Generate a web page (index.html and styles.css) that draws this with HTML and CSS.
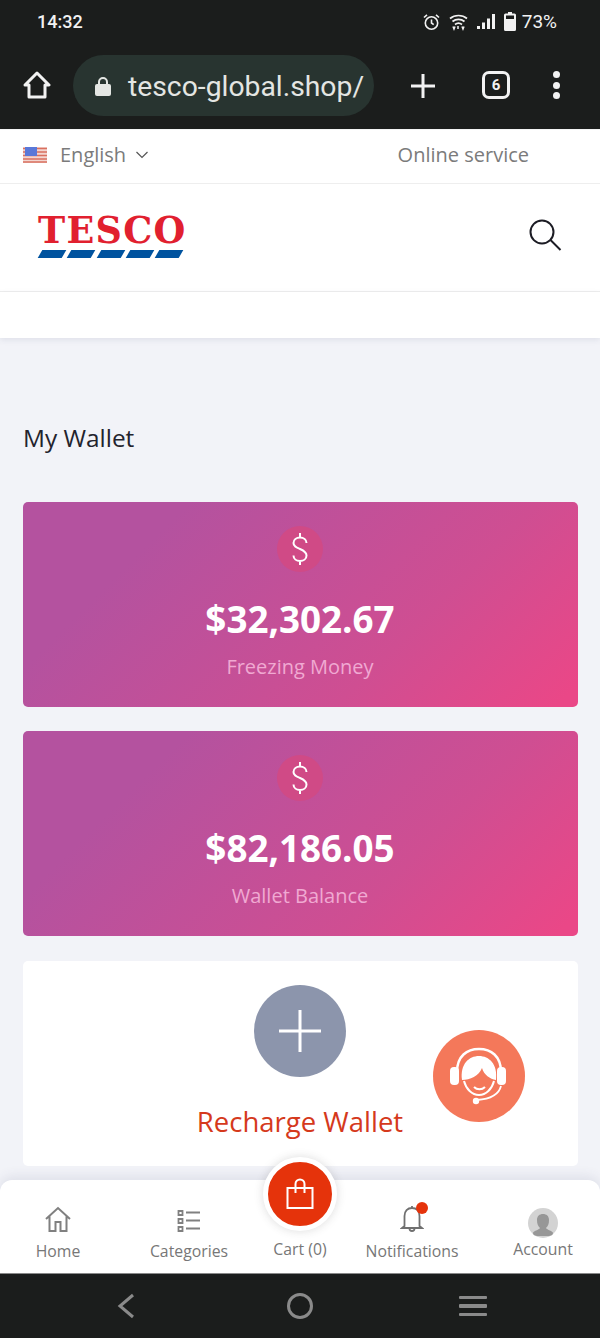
FILE: index.html
```html
<!DOCTYPE html>
<html lang="en">

<head>
  <meta charset="UTF-8">
  <meta name="viewport" content="width=device-width, initial-scale=1.0">
  <title>My Wallet</title>
  <link rel="stylesheet" href="styles.css">
</head>

<body>

  <header class="browser">
    <div class="status">
      <span class="clock">14:32</span>
      <div class="status-icons">
        <svg width="17" height="18" viewBox="0 0 17 18" fill="none" stroke="#f2f2f2" stroke-width="1.6"><circle cx="8.500" cy="10" r="6.200"/><path d="M8.500 6.500V10l2.200 1.600M1 4.500 4 1.800M16 4.500l-3-2.700"/></svg>
        <svg width="19" height="18" viewBox="0 0 19 18" fill="none" stroke="#f2f2f2" stroke-width="1.700"><path d="M1 5.500c4.800-4 12.200-4 17 0M3.500 8.500c3.500-2.800 8.500-2.800 12 0M6 11.500c2-1.500 5-1.500 7 0"/><path d="M4 13.500 5 16l1-2.500M13 13.500l1 2.500 1-2.500M9 13v3" stroke-width="1.500"/></svg>
        <svg width="18" height="16" viewBox="0 0 18 16" fill="#f2f2f2"><rect x="0" y="12" width="3" height="3"/><rect x="5" y="8.500" width="3" height="6.500"/><rect x="10" y="4.500" width="3" height="10.500"/><rect x="15" y="0" width="3" height="15"/></svg>
        <svg width="12" height="19" viewBox="0 0 12 19" fill="#f2f2f2"><path d="M4 0h4v1.500h2.500q1.500 0 1.500 1.500v14.500q0 1.500-1.500 1.500h-9Q0 19 0 17.500V3q0-1.500 1.500-1.500H4z"/><rect x="2" y="3.500" width="8" height="3.500" fill="#1b1d1c"/></svg>
        <span class="battery">73%</span>
      </div>
    </div>
    <div class="toolbar">
      <svg class="home-btn" width="28" height="30" viewBox="0 0 28 30" fill="none" stroke="#f2f2f2" stroke-width="3" stroke-linejoin="round"><path d="M2 15 14 3l12 12h-4v12H6V15z"/></svg>
      <div class="urlbar">
        <svg width="16" height="20" viewBox="0 0 16 20"><path d="M4 9V6a4 4 0 0 1 8 0v3" fill="none" stroke="#e4e6e3" stroke-width="2"/><rect y="8" width="16" height="12" rx="2" fill="#e4e6e3"/></svg>
        <span class="url">tesco-global.shop/</span>
      </div>
      <svg class="plus-btn" width="26" height="26" viewBox="0 0 26 26" stroke="#f2f2f2" stroke-width="3"><path d="M13 1v24M1 13h24"/></svg>
      <span class="tabs">6</span>
      <div class="dots"><i></i><i></i><i></i></div>
    </div>
  </header>

  <div class="topbar">
    <div class="lang">
      <svg class="flag" width="24" height="16" viewBox="0 0 24 16">
        <rect width="24" height="16" fill="#f3d6d0"/>
        <path d="M0 1.500h24M0 5h24M0 8.500h24M0 12h24M0 15h24" stroke="#d9705f" stroke-width="1.600"/>
        <rect x="2" width="12" height="9" fill="#5a78d8"/>
      </svg>
      <span>English</span>
      <svg class="chevron" width="14" height="8" viewBox="0 0 14 8" fill="none" stroke="#555" stroke-width="1.200"><path d="m1.500 1 5.500 5.500L12.500 1"/></svg>
    </div>
    <span class="service">Online service</span>
  </div>

  <div class="logobar">
    <div class="logo">
      <span class="logo-text">TESCO</span>
      <div class="logo-stripes"><i></i><i></i><i></i><i></i><i></i></div>
    </div>
    <svg width="34" height="34" viewBox="0 0 34 34" fill="none" stroke="#1c1c24" stroke-width="2"><circle cx="14" cy="14" r="11.500"/><path d="m22.500 22 10 10"/></svg>
  </div>

  <div class="navbar"></div>

  <main class="page">
    <h2 class="page-title">My Wallet</h2>

    <section class="wallet-card">
      <div class="coin">
        <svg width="18" height="34" viewBox="0 0 18 34" fill="none" stroke="#fff" stroke-width="2"><path d="M15.500 11c0-3.500-3-5.500-6.500-5.500S2.500 7.500 2.500 11 5.500 15.500 9 17s6.500 3 6.500 6.500-3 5.500-6.500 5.500-6.500-2-6.500-5.500M9 1v4.500M9 29v4"/></svg>
      </div>
      <div class="amount">$32,302.67</div>
      <div class="amount-label">Freezing Money</div>
    </section>

    <section class="wallet-card">
      <div class="coin">
        <svg width="18" height="34" viewBox="0 0 18 34" fill="none" stroke="#fff" stroke-width="2"><path d="M15.500 11c0-3.500-3-5.500-6.500-5.500S2.500 7.500 2.500 11 5.500 15.500 9 17s6.500 3 6.500 6.500-3 5.500-6.500 5.500-6.500-2-6.500-5.500M9 1v4.500M9 29v4"/></svg>
      </div>
      <div class="amount">$82,186.05</div>
      <div class="amount-label">Wallet Balance</div>
    </section>

    <section class="recharge">
      <div class="recharge-btn">
        <svg width="42" height="42" viewBox="0 0 42 42" stroke="#fff" stroke-width="3"><path d="M21 0v42M0 21h42"/></svg>
      </div>
      <div class="recharge-label">Recharge Wallet</div>
    </section>

    <div class="support">
      <svg width="80" height="80" viewBox="0 0 80 80">
        <path d="M18 36C18 20 28 13 40 13s22 7 22 23" fill="none" stroke="#fff" stroke-width="2.500"/>
        <path d="M23 44c-2-16 7-24 17-24s19 8 17 24c-6-1-12-5-14-12-3 8-12 12-20 12z" fill="#fff"/>
        <path d="M25 45c2 8 8 14 15 14s13-6 15-14" fill="none" stroke="#fff" stroke-width="2"/>
        <path d="M35 51c3 3 8 3 11 0" fill="none" stroke="#fff" stroke-width="2"/>
        <rect x="11" y="31" width="9" height="18" rx="4" fill="#fff"/>
        <rect x="58" y="31" width="9" height="18" rx="4" fill="#fff"/>
        <path d="M62 50c-2 8-10 13-24 14" fill="none" stroke="#fff" stroke-width="1.800"/>
        <circle cx="37" cy="65" r="3.200" fill="#fff"/>
      </svg>
    </div>
  </main>

  <nav class="tabbar">
    <a class="tab">
      <svg width="28" height="28" viewBox="0 0 28 28" fill="none" stroke="#808080" stroke-width="2"><path d="M2 14 14 3l12 11M5.500 11.500V26h6v-9h5v9h6V11.500"/></svg>
      <span>Home</span>
    </a>
    <a class="tab">
      <svg width="24" height="24" viewBox="0 0 24 24" fill="none" stroke="#808080" stroke-width="1.800"><path d="M1.500 2h4v4h-4zM1.500 10h4v4h-4zM1.500 18h4v4h-4zM9 3.500h14M9 11.500h14M9 19.500h14"/></svg>
      <span>Categories</span>
    </a>
    <a class="tab tab-cart">
      <span>Cart (0)</span>
    </a>
    <a class="tab">
      <svg width="24" height="28" viewBox="0 0 24 28" fill="none" stroke="#707070" stroke-width="1.800"><path d="M4.500 21V11c0-5 3-8 7.500-8s7.500 3 7.500 8v10l2.500 2H2zM9.500 23.500a2.500 2.500 0 0 0 5 0M12 1v2"/></svg>
      <span>Notifications</span>
      <i class="dot"></i>
    </a>
    <a class="tab tab-account">
      <svg class="avatar" width="30" height="30" viewBox="0 0 30 30">
        <circle cx="15" cy="15" r="15" fill="#d3d3d3"/>
        <path d="M9 28c-3-.5-4-1.500-4-3 0-2 6-3 7-5-2-2-3-4-3-8 0-4 2.500-6 6-6s6 2 6 6c0 4-1 6-3 8 1 2 7 3 7 5 0 1.500-1 2.500-4 3z" fill="#979797"/>
      </svg>
      <span>Account</span>
    </a>
    <div class="cart-btn">
      <svg width="28" height="32" viewBox="0 0 28 32" fill="none" stroke="#fff" stroke-width="2"><path d="M1.500 10h25v20h-25zM9.500 15V6a4.500 4.500 0 0 1 9 0v9"/></svg>
    </div>
  </nav>

  <footer class="android-nav">
    <svg width="18" height="26" viewBox="0 0 18 26" fill="none" stroke="#8a8a8a" stroke-width="3"><path d="M16 2 3 13l13 11"/></svg>
    <span class="android-home"></span>
    <div class="android-menu"><i></i><i></i><i></i></div>
  </footer>

</body>

</html>
```

FILE: styles.css
```css
* {
  box-sizing: border-box;
}

html,
body {
  margin: 0;
  height: 100%;
}

body {
  display: flex;
  flex-direction: column;
  height: 1338px;
  overflow: hidden;
  font-family: "Open Sans", "Liberation Sans", sans-serif;
  background-color: #f2f3f8;
}

.browser {
  height: 129px;
  background-color: #1b1d1c;
  color: #f2f2f2;
  font-family: Roboto, "Liberation Sans", sans-serif;
}

.status {
  display: flex;
  justify-content: space-between;
  align-items: center;
  height: 43px;
  padding: 0 43px 0 37px;
}

.clock {
  font-size: 18px;
  font-weight: 500;
}

.status-icons {
  display: flex;
  align-items: center;
  gap: 9px;
}

.battery {
  margin-left: -3px;
  font-size: 19px;
}

.toolbar {
  display: flex;
  align-items: center;
  height: 86px;
  padding: 0 0 2px 23px;
}

.home-btn {
  flex: none;
}

.urlbar {
  display: flex;
  align-items: center;
  gap: 17px;
  width: 301px;
  height: 61px;
  margin-left: 22px;
  padding: 2px 0 0 22px;
  border-radius: 31px;
  background-color: #283430;
  overflow: hidden;
}

.url {
  font-size: 28.300px;
  color: #e4e6e3;
  white-space: nowrap;
}

.plus-btn {
  margin: 2px 0 0 36px;
  flex: none;
}

.tabs {
  display: flex;
  align-items: center;
  justify-content: center;
  width: 28px;
  height: 28px;
  margin-left: 46px;
  border: 3px solid #f2f2f2;
  border-radius: 7px;
  font-size: 15px;
  font-weight: 700;
  flex: none;
}

.dots {
  display: flex;
  flex-direction: column;
  gap: 3.500px;
  margin-left: 43px;
}

.dots i {
  width: 7px;
  height: 7px;
  border-radius: 50%;
  background-color: #f2f2f2;
}

.topbar {
  display: flex;
  justify-content: space-between;
  align-items: center;
  height: 55px;
  padding: 0 71px 4px 23px;
  background-color: #fff;
  border-top: 1px solid #f4f4f4;
  border-bottom: 1px solid #eeeeee;
  color: #7b7b7b;
  font-size: 20px;
}

.lang {
  display: flex;
  align-items: center;
  gap: 13px;
}

.flag {
  flex: none;
  margin-top: 1px;
}

.chevron {
  margin-left: -4px;
}

.logobar {
  display: flex;
  justify-content: space-between;
  align-items: center;
  height: 108px;
  padding: 0 38px 6px;
  background-color: #fff;
  border-bottom: 1px solid #eeeeee;
}

.logo {
  display: flex;
  flex-direction: column;
  width: 148px;
}

.logo-text {
  margin-top: 2px;
  color: #e1202f;
  font-family: "DejaVu Serif", serif;
  font-size: 36.500px;
  font-weight: 700;
  line-height: 34px;
  letter-spacing: 1.300px;
  white-space: nowrap;
}

.logo-stripes {
  display: flex;
  gap: 5.200px;
  margin-top: 2px;
  padding-left: 2.300px;
}

.logo-stripes i {
  flex: none;
  width: 24px;
  height: 8px;
  background-color: #00539f;
  transform: skewX(-30deg);
}

.navbar {
  height: 46px;
  background-color: #fff;
  box-shadow: 0 2px 6px rgba(60, 70, 110, 0.1);
}

.page {
  position: relative;
  flex: 1;
  padding: 0 22px 0 23px;
  overflow: hidden;
}

.page-title {
  margin: 83px 0 47px;
  font-size: 24.400px;
  font-weight: 400;
  line-height: 34px;
  color: #23232d;
}

.wallet-card {
  display: flex;
  flex-direction: column;
  align-items: center;
  height: 205px;
  margin-bottom: 24px;
  padding: 24px 1px 0 0;
  border-radius: 5px;
  background: linear-gradient(135deg, #b4529f 22%, #cf4e92 68%, #ea4787 97%);
  color: #fff;
}

.coin {
  display: flex;
  align-items: center;
  justify-content: center;
  width: 46px;
  height: 46px;
  border-radius: 50%;
  background-color: #d04a86;
}

.amount {
  margin-top: 23px;
  font-size: 36.800px;
  font-weight: 700;
  line-height: 48px;
}

.amount-label {
  margin-top: 10px;
  font-size: 20px;
  line-height: 28px;
  color: #f0a9d2;
}

.recharge {
  display: flex;
  flex-direction: column;
  align-items: center;
  height: 205px;
  margin-top: 25px;
  padding: 24px 1px 0 0;
  border-radius: 5px;
  background-color: #fff;
}

.recharge-btn {
  display: flex;
  align-items: center;
  justify-content: center;
  width: 92px;
  height: 92px;
  border-radius: 50%;
  background-color: #8c95ac;
}

.recharge-label {
  margin-top: 25px;
  font-size: 27.500px;
  line-height: 40px;
  color: #d5391c;
}

.support {
  position: absolute;
  top: 692px;
  left: 433px;
  display: flex;
  align-items: center;
  justify-content: center;
  width: 92px;
  height: 92px;
  border-radius: 50%;
  background-color: #f4785a;
}

.tabbar {
  position: relative;
  display: grid;
  grid-template-columns: 116px 146px 76px 148px 114px;
  height: 94px;
  border-radius: 12px 12px 0 0;
  background-color: #fff;
  border-bottom: 1px solid #888;
  box-shadow: 0 -4px 12px rgba(60, 70, 110, 0.1);
  color: #777;
  font-size: 15.800px;
}

.tab {
  position: relative;
  display: flex;
  flex-direction: column;
  align-items: center;
  justify-content: flex-end;
  gap: 7px;
  padding-bottom: 11px;
  white-space: nowrap;
}

.tab-cart {
  padding-bottom: 13px;
}

.tab-account {
  gap: 0;
  padding-bottom: 13px;
}

.dot {
  position: absolute;
  top: 22px;
  left: 78px;
  width: 12px;
  height: 12px;
  border-radius: 50%;
  background-color: #e5330b;
}

.cart-btn {
  position: absolute;
  top: -23px;
  left: 263px;
  display: flex;
  align-items: center;
  justify-content: center;
  width: 74px;
  height: 74px;
  border: 5px solid #fff;
  border-radius: 50%;
  background-color: #e5330b;
  box-shadow: 0 0 10px rgba(60, 60, 60, 0.18);
}

.android-nav {
  display: flex;
  align-items: center;
  height: 64px;
  padding-left: 117px;
  background-color: #1b1d1c;
}

.android-home {
  width: 26px;
  height: 26px;
  margin-left: 152px;
  border: 3px solid #8a8a8a;
  border-radius: 50%;
}

.android-menu {
  display: flex;
  flex-direction: column;
  gap: 5px;
  margin-left: 146px;
}

.android-menu i {
  width: 28px;
  height: 3.500px;
  border-radius: 1px;
  background-color: #8a8a8a;
}
```
